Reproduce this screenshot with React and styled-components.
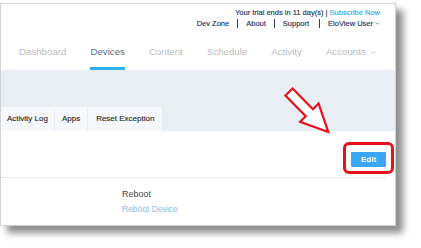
import styled, { createGlobalStyle } from 'styled-components'

const Global = createGlobalStyle`
  body {
    margin: 0;
    background: #fff;
    font-family: "Liberation Sans", Arial, sans-serif;
  }
`
const Page = styled.div`
  position: relative;
  width: 421px;
  height: 248px;
  padding-top: 3px;
  box-sizing: border-box;
  overflow: hidden;
`
const Card = styled.div`
  width: 396px;
  height: 223px;
  box-sizing: border-box;
  border: 1px solid #d2d2d2;
  background: #fff;
  box-shadow: 7px 7px 7px rgba(0, 0, 0, 0.45);
  overflow: hidden;
`
const Header = styled.div`
  height: 66px;
  display: flex;
  flex-direction: column;
`
const TopLinks = styled.div`
  display: flex;
  flex-direction: column;
  align-items: flex-end;
  padding: 2.5px 15px 0 0;
  font-size: 7.5px;
  line-height: 11px;
  color: #233657;
  -webkit-text-stroke: 0.15px #233657;
`
const Row = styled.div`
  display: flex;
  align-items: center;
`
const Accent = styled.span`
  color: #3aa9ef;
  -webkit-text-stroke: 0.15px #3aa9ef;
`
const Sep = styled.span`
  display: inline-block;
  width: 1px;
  height: 9px;
  background: #2b3d5c;
  margin: 0 8px 0 ${props => props.$wide ? 10 : 8}px;
`
const NavBar = styled.nav`
  margin-top: auto;
  display: flex;
  gap: 24px;
  padding-left: 18px;
`
const NavItem = styled.div`
  display: flex;
  align-items: center;
  gap: 2px;
  font-size: 9.7px;
  line-height: 14px;
  padding-bottom: 8px;
  color: ${props => props.$active ? '#5c6f7e' : '#b8bcc0'};
  border-bottom: 3px solid ${props => props.$active ? '#2fb0ee' : 'transparent'};
`
const Band = styled.div`
  height: 61px;
  background: #e9edf4;
  display: flex;
  align-items: flex-end;
`
const Tabs = styled.div`
  display: flex;
  gap: 1px;
`
const Tab = styled.div`
  height: 24px;
  line-height: 24px;
  padding: 0 ${props => props.$pad || 7}px;
  background: #f6f8fb;
  font-size: 8px;
  color: #2d2d2d;
  -webkit-text-stroke: 0.15px #2d2d2d;
`
const Toolbar = styled.div`
  height: 46px;
  box-sizing: border-box;
  display: flex;
  justify-content: flex-end;
  align-items: flex-start;
  padding: 11px 1px 0 0;
`
const Highlight = styled.div`
  border: 3px solid #e8101a;
  border-radius: 6px;
  padding: 3px 5px 4px;
`
const EditButton = styled.button`
  width: 35px;
  height: 15px;
  border: none;
  border-radius: 1px;
  background: #3ba7f3;
  color: #fff;
  font-family: inherit;
  font-weight: bold;
  font-size: 8px;
  padding: 0;
`
const Divider = styled.div`
  height: 1px;
  background: #e6e6e6;
  margin-right: 8px;
`
const Section = styled.div`
  padding: 10px 0 0 121px;
`
const Title = styled.div`
  font-size: 9px;
  line-height: 12px;
  color: #4a4a4a;
`
const Link = styled.div`
  margin-top: 3px;
  font-size: 8.5px;
  line-height: 12px;
  color: #8db9ea;
`
const Arrow = styled.svg`
  position: absolute;
  left: 270px;
  top: 75px;
`

const Chevron = ({ size = 5, color }) => (
  <svg width={size} height={size} viewBox="0 0 10 10" style={{ marginLeft: 2 }}>
    <path d="M2 3.5 L5 6.5 L8 3.5" fill="none" stroke={color} strokeWidth="1.2" />
  </svg>
)

const navItems = ['Dashboard', 'Devices', 'Content', 'Schedule', 'Activity']

const App = () => (
  <Page>
    <Global />
    <Card>
      <Header>
        <TopLinks>
          <div>Your trial ends in 11 day(s) | <Accent>Subscribe Now</Accent></div>
          <Row>
            Dev Zone<Sep />About<Sep />Support<Sep $wide />EloView User
            <Chevron color="#2b3d5c" />
          </Row>
        </TopLinks>
        <NavBar>
          {navItems.map(item => (
            <NavItem key={item} $active={item === 'Devices'}>{item}</NavItem>
          ))}
          <NavItem>Accounts<Chevron size={7} color="#b8bcc0" /></NavItem>
        </NavBar>
      </Header>
      <Band>
        <Tabs>
          <Tab $pad={6}>Activity Log</Tab>
          <Tab>Apps</Tab>
          <Tab $pad={8}>Reset Exception</Tab>
        </Tabs>
      </Band>
      <Toolbar>
        <Highlight>
          <EditButton>Edit</EditButton>
        </Highlight>
      </Toolbar>
      <Divider />
      <Section>
        <Title>Reboot</Title>
        <Link>Reboot Device</Link>
      </Section>
    </Card>
    <Arrow width="70" height="70" viewBox="0 0 70 70">
      <polygon
        points="0,-5 29,-5 29,-13 56,0 29,13 29,5 0,5"
        transform="translate(19 17) rotate(45.5)"
        fill="#fff"
        stroke="#e8101a"
        strokeWidth="2.2"
      />
    </Arrow>
  </Page>
)

export default App
